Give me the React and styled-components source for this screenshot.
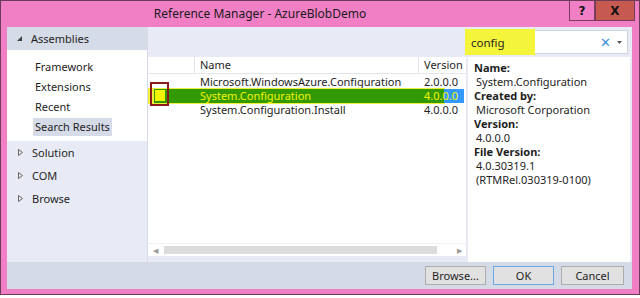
import React from 'react';
import styled, { createGlobalStyle } from 'styled-components';

const GlobalStyle = createGlobalStyle`
  html, body {
    margin: 0;
    padding: 0;
    background: #ffffff;
  }
  body {
    font-family: "Noto Sans", "Open Sans", sans-serif;
    font-size: 11px;
    color: #1e1e1e;
  }
`;

const Window = styled.div`
  width: 638px;
  height: 293px;
  background: #f07fc6;
  border: 1px solid #6b3b57;
  display: flex;
  flex-direction: column;
`;

const TitleBar = styled.div`
  height: 25px;
  display: flex;
  align-items: flex-start;
`;

const Title = styled.div`
  flex: 1;
  text-align: center;
  font-size: 12px;
  line-height: 25px;
  color: #1a1a1a;
  padding-right: 50px;
`;

const Caption = styled.div`
  display: flex;
  margin-right: 4px;
`;

const CaptionButton = styled.div`
  height: 19px;
  width: ${p => p.w}px;
  background: ${p => p.bg};
  border: 1px solid #7b3b5c;
  border-top: none;
  display: flex;
  align-items: center;
  justify-content: center;
  font-family: "DejaVu Sans", sans-serif;
  font-weight: bold;
  font-size: 12px;
  color: #111;
`;

const Body = styled.div`
  flex: 1;
  margin: 1px 7px 5px 6px;
  display: flex;
  flex-direction: column;
  background: #e8ebf5;
`;

const Main = styled.div`
  flex: 1;
  display: flex;
`;

const LeftPanel = styled.div`
  width: 140px;
  display: flex;
  flex-direction: column;
  background: #e8ebf5;
  border-right: 1px solid #d8dcea;
`;

const GroupHeader = styled.div`
  height: 23px;
  background: #d6dbe8;
  display: flex;
  align-items: center;
  padding-left: 9px;
  gap: 8px;
  font-size: 11px;
`;

const SubList = styled.div`
  background: #ffffff;
  padding: 8px 0 5px 26px;
  display: flex;
  flex-direction: column;
  gap: 2px;
`;

const SubItem = styled.div`
  height: 18px;
  line-height: 18px;
  padding: 0 2px;
  align-self: flex-start;
  font-size: 11px;
  background: ${p => (p.active ? '#d6dbe8' : 'transparent')};
`;

const TreeItems = styled.div`
  display: flex;
  flex-direction: column;
  padding-top: 2px;
  gap: 5px;
`;

const TreeItem = styled.div`
  height: 18px;
  display: flex;
  align-items: center;
  padding-left: 10px;
  gap: 8px;
  font-size: 11px;
`;

const RightPanel = styled.div`
  flex: 1;
  display: flex;
  flex-direction: column;
`;

const SearchStrip = styled.div`
  height: 30px;
  display: flex;
  justify-content: flex-end;
  align-items: center;
  padding-right: 4px;
`;

const SearchBox = styled.div`
  width: 160px;
  height: 22px;
  background: #ffffff;
  border: 1px solid #cfd3dc;
  display: flex;
  align-items: center;
`;

const SearchText = styled.div`
  width: 70px;
  height: 26px;
  margin-left: -2px;
  background: #f4f43a;
  display: flex;
  align-items: center;
  padding-left: 6px;
  font-size: 11.5px;
  box-sizing: border-box;
`;

const SearchIcons = styled.div`
  margin-left: auto;
  display: flex;
  align-items: center;
  gap: 6px;
  padding-right: 5px;
  font-size: 13px;
  color: #3b8fd6;
`;

const Content = styled.div`
  flex: 1;
  display: flex;
  gap: 2px;
`;

const ListArea = styled.div`
  width: 318px;
  display: flex;
  flex-direction: column;
  padding-bottom: 6px;
`;

const List = styled.div`
  flex: 1;
  background: #ffffff;
  display: flex;
  flex-direction: column;
`;

const Row = styled.div`
  display: grid;
  grid-template-columns: 46px 224px 48px;
  height: ${p => (p.header ? 16 : 14)}px;
  line-height: ${p => (p.header ? 16 : 14)}px;
  font-size: 11px;
  border-bottom: ${p => (p.header ? '1px solid #e3e5ea' : 'none')};
  margin-bottom: ${p => (p.header ? 1 : 0)}px;
  position: relative;
`;

const Cell = styled.div`
  position: relative;
  padding-left: ${p => (p.header ? 5 : 6)}px;
  white-space: nowrap;
  overflow: hidden;
  border-left: ${p => (p.header && p.sep ? '1px solid #e3e5ea' : 'none')};
  color: ${p => (p.sel ? '#f4f400' : '#1e1e1e')};
`;

const Highlighter = styled.div`
  position: absolute;
  left: 0;
  top: -1px;
  width: 297px;
  height: 16px;
  background: #f0f03a;
`;

const SelectedBar = styled.div`
  position: absolute;
  left: 6px;
  top: 0;
  width: 290px;
  height: 14px;
  background: #339900;
`;

const SelectionTail = styled.div`
  position: absolute;
  left: 296px;
  top: 0;
  width: 20px;
  height: 14px;
  background: #3399ff;
`;

const CheckMark = styled.div`
  position: absolute;
  left: 2px;
  top: -7px;
  width: 19px;
  height: 24px;
  border: 2px solid #8b1a1a;
  display: flex;
  align-items: flex-end;
  justify-content: center;
  padding-bottom: 3px;
  box-sizing: border-box;
`;

const CheckFill = styled.div`
  width: 10px;
  height: 11px;
  background: #f4f400;
`;

const Scrollbar = styled.div`
  margin-top: auto;
  height: 12px;
  display: flex;
  align-items: center;
  gap: 6px;
  padding: 0 4px 0 5px;
  background: #ffffff;
  border-top: 1px solid #eef0f3;
  font-size: 7px;
  color: #9a9a9a;
`;

const Thumb = styled.div`
  flex: 1;
  height: 8px;
  background: #dcdcdc;
  margin-right: 14px;
`;

const Details = styled.div`
  flex: 1;
  background: #ffffff;
  padding: 4px 4px 0 6px;
  margin-right: 2px;
  display: flex;
  flex-direction: column;
`;

const DetailLabel = styled.div`
  font-weight: bold;
  line-height: 14px;
  font-size: 11px;
`;

const DetailValue = styled.div`
  line-height: 14px;
  font-size: 11px;
  padding-left: 2px;
`;

const Footer = styled.div`
  height: 27px;
  background: #d5dbe6;
  display: flex;
  justify-content: flex-end;
  align-items: center;
  gap: 7px;
  padding-right: 8px;
`;

const Button = styled.div`
  width: ${p => p.w || 61}px;
  height: 19px;
  box-sizing: border-box;
  background: #e1e1e1;
  border: 1px solid ${p => (p.primary ? '#6aa7e4' : '#adadad')};
  display: flex;
  align-items: center;
  justify-content: center;
  font-size: 11px;
`;

const Tri = ({ open }) => (
  <svg width="7" height="7" viewBox="0 0 7 7">
    {open ? (
      <path d="M6 1 L6 6 L1 6 Z" fill="#444" />
    ) : (
      <path d="M1.5 0.5 L5.5 3.5 L1.5 6.5 Z" fill="none" stroke="#666" strokeWidth="1" />
    )}
  </svg>
);

const rows = [
  { name: 'Microsoft.WindowsAzure.Configuration', version: '2.0.0.0' },
  { name: 'System.Configuration', version: '4.0.0.0', selected: true },
  { name: 'System.Configuration.Install', version: '4.0.0.0' },
];

export default function App() {
  return (
    <>
      <GlobalStyle />
      <Window>
        <TitleBar>
          <Title>Reference Manager - AzureBlobDemo</Title>
          <Caption>
            <CaptionButton w={24} bg="#f07fc6">?</CaptionButton>
            <CaptionButton w={38} bg="#c75a50">X</CaptionButton>
          </Caption>
        </TitleBar>
        <Body>
          <Main>
            <LeftPanel>
              <GroupHeader>
                <Tri open />
                Assemblies
              </GroupHeader>
              <SubList>
                <SubItem>Framework</SubItem>
                <SubItem>Extensions</SubItem>
                <SubItem>Recent</SubItem>
                <SubItem active>Search Results</SubItem>
              </SubList>
              <TreeItems>
                <TreeItem><Tri />Solution</TreeItem>
                <TreeItem><Tri />COM</TreeItem>
                <TreeItem><Tri />Browse</TreeItem>
              </TreeItems>
            </LeftPanel>
            <RightPanel>
              <SearchStrip>
                <SearchBox>
                  <SearchText>config</SearchText>
                  <SearchIcons>
                    <span>✕</span>
                    <svg width="5" height="3" viewBox="0 0 5 3"><path d="M0 0 L5 0 L2.5 3 Z" fill="#555" /></svg>
                  </SearchIcons>
                </SearchBox>
              </SearchStrip>
              <Content>
                <ListArea>
                  <List>
                    <Row header>
                      <Cell header></Cell>
                      <Cell header sep>Name</Cell>
                      <Cell header sep>Version</Cell>
                    </Row>
                    {rows.map(r => (
                      <Row key={r.name}>
                        {r.selected && (
                          <>
                            <Highlighter />
                            <SelectedBar />
                            <SelectionTail />
                            <CheckMark><CheckFill /></CheckMark>
                          </>
                        )}
                        <Cell></Cell>
                        <Cell sel={r.selected}>{r.name}</Cell>
                        <Cell sel={r.selected}>{r.version}</Cell>
                      </Row>
                    ))}
                    <Scrollbar>
                      <span>◀</span>
                      <Thumb />
                      <span>▶</span>
                    </Scrollbar>
                  </List>
                </ListArea>
                <Details>
                  <DetailLabel>Name:</DetailLabel>
                  <DetailValue>System.Configuration</DetailValue>
                  <DetailLabel>Created by:</DetailLabel>
                  <DetailValue>Microsoft Corporation</DetailValue>
                  <DetailLabel>Version:</DetailLabel>
                  <DetailValue>4.0.0.0</DetailValue>
                  <DetailLabel>File Version:</DetailLabel>
                  <DetailValue>4.0.30319.1</DetailValue>
                  <DetailValue>(RTMRel.030319-0100)</DetailValue>
                </Details>
              </Content>
            </RightPanel>
          </Main>
          <Footer>
            <Button>Browse...</Button>
            <Button primary>OK</Button>
            <Button w={63}>Cancel</Button>
          </Footer>
        </Body>
      </Window>
    </>
  );
}
